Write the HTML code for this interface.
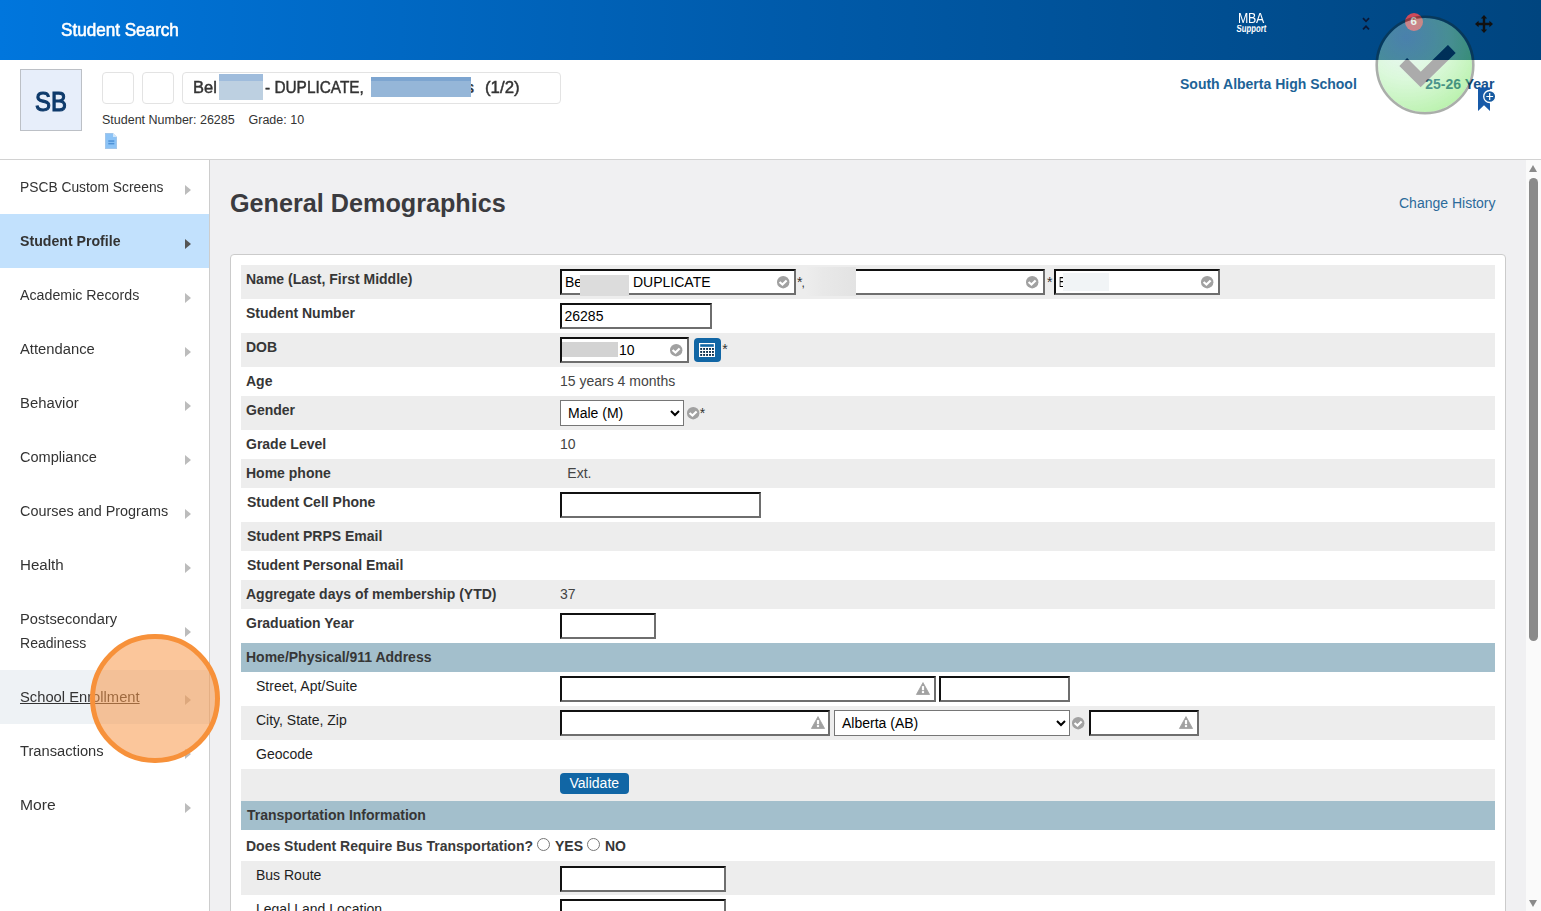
<!DOCTYPE html>
<html><head><meta charset="utf-8"><style>
*{box-sizing:border-box}
html,body{margin:0;padding:0}
body{width:1541px;height:911px;overflow:hidden;position:relative;background:#fff;font-family:"Liberation Sans",sans-serif;color:#333}
.a{position:absolute}
.t{position:absolute;white-space:nowrap;line-height:1}
.inp{position:absolute;background:#fff;border-style:solid;border-width:2px;border-color:#111 #6e6e6e #6e6e6e #111}
.sel{position:absolute;background:#fff;border:1px solid #767676;border-radius:0}
.tri{position:absolute;width:0;height:0;border-top:5px solid transparent;border-bottom:5px solid transparent;border-left:6px solid #bcbcbc}
svg{position:absolute;overflow:visible}
</style></head><body>
<div class="a" style="left:0;top:0;width:1541px;height:60px;background:linear-gradient(90deg,#0076dd 0%,#005bab 50%,#00457f 100%)"></div>
<div class="t" style="left:60.80px;top:20.76px;font-size:18px;font-weight:normal;color:#fff;transform-origin:0 0;transform:scaleX(0.95);-webkit-text-stroke:0.6px #fff;">Student Search</div>
<div class="t" style="left:1237.50px;top:10.73px;font-size:14.5px;font-weight:normal;color:#fff;transform-origin:0 0;transform:scaleX(0.85);letter-spacing:-0.3px;">MBA</div>
<div class="a" style="left:1236px;top:24.5px;width:32px;height:9px;overflow:hidden"><div class="t" style="left:0.5px;top:-1.6px;font-size:12px;font-weight:bold;color:#fff;transform-origin:0 0;transform:scale(0.65,0.9) skewX(-6deg)">Support</div></div>
<svg style="left:1360px;top:16px" width="12" height="16" viewBox="0 0 12 16"><path d="M3 2.2 L6 5.3 L9 2.2" fill="none" stroke="#0b1836" stroke-width="1.7"/><path d="M3 13.3 L6 10.3 L9 13.3" fill="none" stroke="#0b1836" stroke-width="1.7"/></svg>
<svg style="left:1474px;top:14px" width="20" height="20" viewBox="0 0 20 20"><path d="M10 1 L13.2 4.6 L11.2 4.6 L11.2 8.8 L15.4 8.8 L15.4 6.8 L19 10 L15.4 13.2 L15.4 11.2 L11.2 11.2 L11.2 15.4 L13.2 15.4 L10 19 L6.8 15.4 L8.8 15.4 L8.8 11.2 L4.6 11.2 L4.6 13.2 L1 10 L4.6 6.8 L4.6 8.8 L8.8 8.8 L8.8 4.6 L6.8 4.6 Z" fill="#111"/></svg>
<div class="a" style="left:1405px;top:12.5px;width:18px;height:18px;border-radius:50%;background:#cf4a5a"></div>
<div class="t" style="left:1410.60px;top:16.47px;font-size:11.5px;font-weight:bold;color:#fff;">6</div>
<div class="a" style="left:0;top:159px;width:1541px;height:1px;background:#d2d2d2"></div>
<div class="a" style="left:20px;top:69px;width:62px;height:62px;background:#e7eefa;border:1px solid #bcc0c6"></div>
<div class="t" style="left:35.20px;top:88.54px;font-size:27px;font-weight:normal;color:#0e3a6b;transform-origin:0 0;transform:scaleX(0.885);-webkit-text-stroke:1.1px #0e3a6b;">SB</div>
<div class="a" style="left:102px;top:72px;width:32px;height:32px;border:1px solid #e3e3e3;border-radius:4px"></div>
<div class="a" style="left:142px;top:72px;width:32px;height:32px;border:1px solid #e3e3e3;border-radius:4px"></div>
<div class="a" style="left:182px;top:72px;width:379px;height:32px;border:1px solid #e3e3e3;border-radius:4px"></div>
<div class="t" style="left:193.20px;top:78.61px;font-size:17px;font-weight:normal;color:#333;transform-origin:0 0;transform:scaleX(0.97);-webkit-text-stroke:0.45px #333;">Bel</div>
<div class="a" style="left:219px;top:81px;width:44px;height:18.5px;background:#bdd0e1"></div>
<div class="a" style="left:219px;top:73.5px;width:44px;height:7.5px;background:#9fbcdc"></div>
<div class="t" style="left:265.30px;top:78.61px;font-size:17px;font-weight:normal;color:#333;transform-origin:0 0;transform:scaleX(0.905);-webkit-text-stroke:0.45px #333;">- DUPLICATE,</div>
<div class="a" style="left:371px;top:80.6px;width:100px;height:16.8px;background:#95b6d8"></div>
<div class="a" style="left:371px;top:77px;width:100px;height:3.6px;background:#7da5d0"></div>
<div class="a" style="left:471px;top:75px;width:10px;height:24px;overflow:hidden"><div class="t" style="left:-5.5px;top:3.61px;font-size:17px;color:#333;-webkit-text-stroke:0.45px #333">s</div></div>
<div class="t" style="left:484.80px;top:78.61px;font-size:17px;font-weight:normal;color:#333;transform-origin:0 0;transform:scaleX(0.99);-webkit-text-stroke:0.45px #333;">(1/2)</div>
<div class="t" style="left:102.00px;top:113.62px;font-size:12.5px;font-weight:normal;color:#333;">Student Number: 26285</div>
<div class="t" style="left:248.50px;top:113.62px;font-size:12.5px;font-weight:normal;color:#333;">Grade: 10</div>
<svg style="left:105px;top:133px" width="12" height="16" viewBox="0 0 12 16"><path d="M0 0 H8 L12 4 V16 H0 Z" fill="#a2c6ea"/><path d="M1 1 H7.6 L11 4.4 V15 H1 Z" fill="#8cc3f6"/><path d="M8 0 V4 H12" fill="#d0e6fa"/><rect x="3.3" y="7.3" width="6" height="1.5" fill="#4d92d8"/><rect x="3.3" y="9.9" width="6" height="1.5" fill="#4d92d8"/></svg>
<div class="t" style="left:1180.00px;top:76.95px;font-size:14px;font-weight:bold;color:#1d6397;">South Alberta High School</div>
<div class="t" style="left:1425.30px;top:76.75px;font-size:14px;font-weight:bold;color:#15518c;">25-26 Year</div>
<svg style="left:1477px;top:87px" width="20" height="26" viewBox="0 0 20 26"><path d="M1 0.4 H13 V24 L7 18.2 L1 24 Z" fill="#175aa8"/><circle cx="12.7" cy="9.5" r="6" fill="#175aa0" stroke="#fff" stroke-width="1.3"/><path d="M12.7 6.1 V12.9 M9.3 9.5 H16.1" stroke="#fff" stroke-width="1.2"/></svg>
<div class="a" style="left:209px;top:160px;width:1px;height:751px;background:#cdcdcd"></div>
<div class="t" style="left:19.50px;top:180.15px;font-size:14px;font-weight:normal;color:#333;transform-origin:0 0;transform:scaleX(0.986);">PSCB Custom Screens</div>
<div class="tri" style="left:185px;top:185px;border-left-color:#bcbcbc"></div>
<div class="a" style="left:0;top:214px;width:209px;height:54px;background:#c2e1fd"></div>
<div class="t" style="left:19.50px;top:234.15px;font-size:14px;font-weight:bold;color:#333;transform-origin:0 0;transform:scaleX(1.01);">Student Profile</div>
<div class="tri" style="left:185px;top:239px;border-left-color:#555"></div>
<div class="t" style="left:19.50px;top:288.15px;font-size:14px;font-weight:normal;color:#333;transform-origin:0 0;transform:scaleX(1.015);">Academic Records</div>
<div class="tri" style="left:185px;top:293px;border-left-color:#bcbcbc"></div>
<div class="t" style="left:19.50px;top:342.15px;font-size:14px;font-weight:normal;color:#333;transform-origin:0 0;transform:scaleX(1.056);">Attendance</div>
<div class="tri" style="left:185px;top:347px;border-left-color:#bcbcbc"></div>
<div class="t" style="left:19.50px;top:396.15px;font-size:14px;font-weight:normal;color:#333;transform-origin:0 0;transform:scaleX(1.061);">Behavior</div>
<div class="tri" style="left:185px;top:401px;border-left-color:#bcbcbc"></div>
<div class="t" style="left:19.50px;top:450.15px;font-size:14px;font-weight:normal;color:#333;transform-origin:0 0;transform:scaleX(1.04);">Compliance</div>
<div class="tri" style="left:185px;top:455px;border-left-color:#bcbcbc"></div>
<div class="t" style="left:19.50px;top:504.15px;font-size:14px;font-weight:normal;color:#333;transform-origin:0 0;transform:scaleX(1.029);">Courses and Programs</div>
<div class="tri" style="left:185px;top:509px;border-left-color:#bcbcbc"></div>
<div class="t" style="left:19.50px;top:558.15px;font-size:14px;font-weight:normal;color:#333;transform-origin:0 0;transform:scaleX(1.08);">Health</div>
<div class="tri" style="left:185px;top:563px;border-left-color:#bcbcbc"></div>
<div class="t" style="left:19.50px;top:612.15px;font-size:14px;font-weight:normal;color:#333;transform-origin:0 0;transform:scaleX(1.049);">Postsecondary</div>
<div class="t" style="left:19.50px;top:636.15px;font-size:14px;font-weight:normal;color:#333;transform-origin:0 0;transform:scaleX(1.003);">Readiness</div>
<div class="tri" style="left:185px;top:627px;border-left-color:#bcbcbc"></div>
<div class="a" style="left:0;top:670px;width:209px;height:54px;background:#eef2f5"></div>
<div class="t" style="left:19.50px;top:690.15px;font-size:14px;font-weight:normal;color:#333;transform-origin:0 0;transform:scaleX(1.053);text-decoration:underline;">School Enrollment</div>
<div class="tri" style="left:185px;top:695px;border-left-color:#bcbcbc"></div>
<div class="t" style="left:19.50px;top:744.15px;font-size:14px;font-weight:normal;color:#333;transform-origin:0 0;transform:scaleX(1.05);">Transactions</div>
<div class="tri" style="left:185px;top:749px;border-left-color:#bcbcbc"></div>
<div class="t" style="left:19.50px;top:798.15px;font-size:14px;font-weight:normal;color:#333;transform-origin:0 0;transform:scaleX(1.12);">More</div>
<div class="tri" style="left:185px;top:803px;border-left-color:#bcbcbc"></div>
<div class="a" style="left:210px;top:160px;width:1316px;height:751px;background:#f0f0f2"></div>
<div class="a" style="left:1526px;top:160px;width:15px;height:751px;background:#fafafa"></div>
<div class="a" style="left:1529px;top:165px;width:0;height:0;border-left:4.5px solid transparent;border-right:4.5px solid transparent;border-bottom:7px solid #8a8a8a"></div>
<div class="a" style="left:1529px;top:178px;width:9px;height:463px;background:#8a8a8a;border-radius:4.5px"></div>
<div class="a" style="left:1529px;top:900px;width:0;height:0;border-left:4.5px solid transparent;border-right:4.5px solid transparent;border-top:7px solid #8a8a8a"></div>
<div class="t" style="left:230.00px;top:191.47px;font-size:25.2px;font-weight:bold;color:#3b3b3f;">General Demographics</div>
<div class="t" style="left:1399.00px;top:195.95px;font-size:14px;font-weight:normal;color:#2c6a9a;">Change History</div>
<div class="a" style="left:230px;top:254px;width:1276px;height:700px;background:#fff;border:1px solid #cbcbcb;border-radius:4px"></div>
<div class="a" style="left:241px;top:265px;width:1254px;height:34px;background:#ededed"></div>
<div class="t" style="left:246.00px;top:271.95px;font-size:14px;font-weight:bold;color:#363636;">Name (Last, First Middle)</div>
<div class="t" style="left:246.00px;top:305.95px;font-size:14px;font-weight:bold;color:#363636;">Student Number</div>
<div class="a" style="left:241px;top:333px;width:1254px;height:34px;background:#ededed"></div>
<div class="t" style="left:246.00px;top:339.95px;font-size:14px;font-weight:bold;color:#363636;">DOB</div>
<div class="t" style="left:246.00px;top:373.95px;font-size:14px;font-weight:bold;color:#363636;">Age</div>
<div class="a" style="left:241px;top:396px;width:1254px;height:34px;background:#ededed"></div>
<div class="t" style="left:246.00px;top:402.95px;font-size:14px;font-weight:bold;color:#363636;">Gender</div>
<div class="t" style="left:246.00px;top:436.95px;font-size:14px;font-weight:bold;color:#363636;">Grade Level</div>
<div class="a" style="left:241px;top:459px;width:1254px;height:29px;background:#ededed"></div>
<div class="t" style="left:246.00px;top:465.95px;font-size:14px;font-weight:bold;color:#363636;">Home phone</div>
<div class="t" style="left:247.00px;top:494.95px;font-size:14px;font-weight:bold;color:#363636;">Student Cell Phone</div>
<div class="a" style="left:241px;top:522px;width:1254px;height:29px;background:#ededed"></div>
<div class="t" style="left:247.00px;top:528.95px;font-size:14px;font-weight:bold;color:#363636;">Student PRPS Email</div>
<div class="t" style="left:247.00px;top:557.95px;font-size:14px;font-weight:bold;color:#363636;">Student Personal Email</div>
<div class="a" style="left:241px;top:580px;width:1254px;height:29px;background:#ededed"></div>
<div class="t" style="left:246.00px;top:586.95px;font-size:14px;font-weight:bold;color:#363636;">Aggregate days of membership (YTD)</div>
<div class="t" style="left:246.00px;top:615.95px;font-size:14px;font-weight:bold;color:#363636;">Graduation Year</div>
<div class="a" style="left:241px;top:643px;width:1254px;height:29px;background:#a3bfcc"></div>
<div class="t" style="left:246.00px;top:649.95px;font-size:14px;font-weight:bold;color:#363636;">Home/Physical/911 Address</div>
<div class="t" style="left:256.00px;top:678.95px;font-size:14px;font-weight:normal;color:#1e1e1e;">Street, Apt/Suite</div>
<div class="a" style="left:241px;top:706px;width:1254px;height:34px;background:#ededed"></div>
<div class="t" style="left:256.00px;top:712.95px;font-size:14px;font-weight:normal;color:#1e1e1e;">City, State, Zip</div>
<div class="t" style="left:256.00px;top:746.95px;font-size:14px;font-weight:normal;color:#1e1e1e;">Geocode</div>
<div class="a" style="left:241px;top:769px;width:1254px;height:32px;background:#ededed"></div>
<div class="a" style="left:241px;top:801px;width:1254px;height:29px;background:#a3bfcc"></div>
<div class="t" style="left:247.00px;top:807.95px;font-size:14px;font-weight:bold;color:#363636;">Transportation Information</div>
<div class="t" style="left:246.00px;top:838.55px;font-size:14px;font-weight:bold;color:#3a3a3a;">Does Student Require Bus Transportation?</div>
<div class="a" style="left:241px;top:861px;width:1254px;height:34px;background:#ededed"></div>
<div class="t" style="left:256.00px;top:867.95px;font-size:14px;font-weight:normal;color:#1e1e1e;">Bus Route</div>
<div class="t" style="left:256.00px;top:901.95px;font-size:14px;font-weight:normal;color:#1e1e1e;">Legal Land Location</div>
<div class="inp" style="left:560px;top:269px;width:236px;height:26px"></div>
<div class="t" style="left:565.00px;top:274.95px;font-size:14px;font-weight:normal;color:#000;">Be</div>
<div class="a" style="left:580px;top:275px;width:49px;height:21px;background:#dcdcdc"></div>
<div class="t" style="left:633.00px;top:274.95px;font-size:14px;font-weight:normal;color:#000;">DUPLICATE</div>
<svg style="left:776.8px;top:275.8px" width="12.4" height="12.4" viewBox="0 0 12 12"><circle cx="6" cy="6" r="6" fill="#a1a1a1"/><path d="M2.5 5.8 L5.3 8.3 L9.3 4.3" fill="none" stroke="#fff" stroke-width="2.1"/></svg>
<div class="t" style="left:797.00px;top:275.15px;font-size:14px;font-weight:normal;color:#333;">*</div>
<div class="t" style="left:801.50px;top:276.84px;font-size:12px;font-weight:normal;color:#333;">,</div>
<div class="inp" style="left:818px;top:269px;width:227px;height:26px"></div>
<div class="a" style="left:806px;top:267px;width:50px;height:29px;background:linear-gradient(90deg,#ededed 0%,#e8e8e8 35%,#e3e3e3 100%)"></div>
<svg style="left:1025.8px;top:275.8px" width="12.4" height="12.4" viewBox="0 0 12 12"><circle cx="6" cy="6" r="6" fill="#a1a1a1"/><path d="M2.5 5.8 L5.3 8.3 L9.3 4.3" fill="none" stroke="#fff" stroke-width="2.1"/></svg>
<div class="t" style="left:1047.00px;top:275.15px;font-size:14px;font-weight:normal;color:#333;">*</div>
<div class="inp" style="left:1054px;top:269px;width:166px;height:26px"></div>
<div class="t" style="left:1059.00px;top:274.95px;font-size:14px;font-weight:normal;color:#000;transform-origin:0 0;transform:scaleX(0.6);">E</div>
<div class="a" style="left:1063px;top:273px;width:46px;height:18px;background:#f1f4f6"></div>
<svg style="left:1200.8px;top:275.8px" width="12.4" height="12.4" viewBox="0 0 12 12"><circle cx="6" cy="6" r="6" fill="#a1a1a1"/><path d="M2.5 5.8 L5.3 8.3 L9.3 4.3" fill="none" stroke="#fff" stroke-width="2.1"/></svg>
<div class="inp" style="left:560px;top:303px;width:152px;height:26px"></div>
<div class="t" style="left:564.50px;top:308.65px;font-size:14px;font-weight:normal;color:#000;">26285</div>
<div class="inp" style="left:560px;top:337px;width:129px;height:26px"></div>
<div class="a" style="left:562px;top:342px;width:56px;height:15px;background:#d3d3d3"></div>
<div class="t" style="left:619.00px;top:342.65px;font-size:14px;font-weight:normal;color:#000;">10</div>
<svg style="left:669.8px;top:343.8px" width="12.4" height="12.4" viewBox="0 0 12 12"><circle cx="6" cy="6" r="6" fill="#a1a1a1"/><path d="M2.5 5.8 L5.3 8.3 L9.3 4.3" fill="none" stroke="#fff" stroke-width="2.1"/></svg>
<div class="a" style="left:694px;top:338px;width:27px;height:24px;background:#1166a5;border-radius:4px"></div>
<svg style="left:694px;top:338px" width="27" height="24" viewBox="0 0 27 24"><rect x="5" y="5" width="16" height="14" fill="#fff"/><rect x="6.2" y="6.2" width="13.6" height="2.6" fill="#1166a5"/><rect x="6.20" y="10.00" width="1.9" height="1.9" fill="#0b2e4c"/><rect x="6.20" y="13.00" width="1.9" height="1.9" fill="#0b2e4c"/><rect x="6.20" y="16.00" width="1.9" height="1.9" fill="#0b2e4c"/><rect x="9.15" y="10.00" width="1.9" height="1.9" fill="#0b2e4c"/><rect x="9.15" y="13.00" width="1.9" height="1.9" fill="#0b2e4c"/><rect x="9.15" y="16.00" width="1.9" height="1.9" fill="#0b2e4c"/><rect x="12.10" y="10.00" width="1.9" height="1.9" fill="#0b2e4c"/><rect x="12.10" y="13.00" width="1.9" height="1.9" fill="#0b2e4c"/><rect x="12.10" y="16.00" width="1.9" height="1.9" fill="#0b2e4c"/><rect x="15.05" y="10.00" width="1.9" height="1.9" fill="#0b2e4c"/><rect x="15.05" y="13.00" width="1.9" height="1.9" fill="#0b2e4c"/><rect x="15.05" y="16.00" width="1.9" height="1.9" fill="#0b2e4c"/><rect x="18.00" y="10.00" width="1.9" height="1.9" fill="#0b2e4c"/><rect x="18.00" y="13.00" width="1.9" height="1.9" fill="#0b2e4c"/><rect x="18.00" y="16.00" width="1.9" height="1.9" fill="#0b2e4c"/></svg>
<div class="t" style="left:722.30px;top:342.15px;font-size:14px;font-weight:normal;color:#333;">*</div>
<div class="t" style="left:560.00px;top:373.75px;font-size:14px;font-weight:normal;color:#444;">15 years 4 months</div>
<div class="sel" style="left:560px;top:400px;width:124px;height:26px"></div>
<div class="t" style="left:568.00px;top:406.15px;font-size:14px;font-weight:normal;color:#000;">Male (M)</div>
<svg style="left:669.7px;top:410.0px" width="10" height="6" viewBox="0 0 10 6"><path d="M1 1 L5 5 L9 1" fill="none" stroke="#000" stroke-width="2"/></svg>
<svg style="left:687.0px;top:406.8px" width="12.4" height="12.4" viewBox="0 0 12 12"><circle cx="6" cy="6" r="6" fill="#a1a1a1"/><path d="M2.5 5.8 L5.3 8.3 L9.3 4.3" fill="none" stroke="#fff" stroke-width="2.1"/></svg>
<div class="t" style="left:699.80px;top:406.15px;font-size:14px;font-weight:normal;color:#333;">*</div>
<div class="t" style="left:560.00px;top:436.65px;font-size:14px;font-weight:normal;color:#444;">10</div>
<div class="t" style="left:567.30px;top:465.95px;font-size:14px;font-weight:normal;color:#444;">Ext.</div>
<div class="inp" style="left:560px;top:492px;width:201px;height:26px"></div>
<div class="t" style="left:560.00px;top:586.65px;font-size:14px;font-weight:normal;color:#444;">37</div>
<div class="inp" style="left:560px;top:613px;width:96px;height:26px"></div>
<div class="inp" style="left:560px;top:676px;width:376px;height:26px"></div>
<svg style="left:916px;top:681.6px" width="14" height="13" viewBox="0 0 14 13"><path d="M7 0.6 L13.6 12.5 H0.4 Z" fill="#a1a1a1" stroke="#a1a1a1" stroke-width="0.8" stroke-linejoin="round"/><rect x="5.9" y="4.1" width="2.2" height="4.1" fill="#fff"/><rect x="5.9" y="9.1" width="2.2" height="2.0" fill="#fff"/></svg>
<div class="inp" style="left:939px;top:676px;width:131px;height:26px"></div>
<div class="inp" style="left:560px;top:710px;width:270px;height:26px"></div>
<svg style="left:811px;top:715.6px" width="14" height="13" viewBox="0 0 14 13"><path d="M7 0.6 L13.6 12.5 H0.4 Z" fill="#a1a1a1" stroke="#a1a1a1" stroke-width="0.8" stroke-linejoin="round"/><rect x="5.9" y="4.1" width="2.2" height="4.1" fill="#fff"/><rect x="5.9" y="9.1" width="2.2" height="2.0" fill="#fff"/></svg>
<div class="sel" style="left:834px;top:710px;width:236px;height:26px"></div>
<div class="t" style="left:842.00px;top:716.15px;font-size:14px;font-weight:normal;color:#000;">Alberta (AB)</div>
<svg style="left:1055.7px;top:720.0px" width="10" height="6" viewBox="0 0 10 6"><path d="M1 1 L5 5 L9 1" fill="none" stroke="#000" stroke-width="2"/></svg>
<svg style="left:1072.3px;top:716.8px" width="12.4" height="12.4" viewBox="0 0 12 12"><circle cx="6" cy="6" r="6" fill="#a1a1a1"/><path d="M2.5 5.8 L5.3 8.3 L9.3 4.3" fill="none" stroke="#fff" stroke-width="2.1"/></svg>
<div class="inp" style="left:1089px;top:710px;width:110px;height:26px"></div>
<svg style="left:1179px;top:715.6px" width="14" height="13" viewBox="0 0 14 13"><path d="M7 0.6 L13.6 12.5 H0.4 Z" fill="#a1a1a1" stroke="#a1a1a1" stroke-width="0.8" stroke-linejoin="round"/><rect x="5.9" y="4.1" width="2.2" height="4.1" fill="#fff"/><rect x="5.9" y="9.1" width="2.2" height="2.0" fill="#fff"/></svg>
<div class="a" style="left:560px;top:773px;width:69px;height:20.5px;background:#1166a5;border-radius:4px"></div>
<div class="t" style="left:569.50px;top:775.75px;font-size:14px;font-weight:normal;color:#fff;">Validate</div>
<div class="a" style="left:537px;top:838px;width:13px;height:13px;border:1px solid #767676;border-radius:50%;background:#fff"></div>
<div class="t" style="left:555.00px;top:839.15px;font-size:14px;font-weight:bold;color:#363636;">YES</div>
<div class="a" style="left:587px;top:838px;width:13px;height:13px;border:1px solid #767676;border-radius:50%;background:#fff"></div>
<div class="t" style="left:605.00px;top:839.15px;font-size:14px;font-weight:bold;color:#363636;">NO</div>
<div class="inp" style="left:560px;top:866px;width:166px;height:26px"></div>
<div class="inp" style="left:560px;top:899px;width:166px;height:26px"></div>
<div class="a" style="left:90.2px;top:633.6px;width:129.6px;height:129.6px;border-radius:50%;border:5.6px solid #f7913a;background:rgba(247,152,72,0.55)"></div>
<svg style="left:1374.8px;top:15px" width="100" height="100" viewBox="0 0 100 100"><defs><radialGradient id="gg" cx="0.3" cy="0.2" r="0.9"><stop offset="0" stop-color="rgb(205,228,240)" stop-opacity="0.36"/><stop offset="0.5" stop-color="rgb(170,240,170)" stop-opacity="0.42"/><stop offset="1" stop-color="rgb(100,225,70)" stop-opacity="0.46"/></radialGradient><mask id="mk"><rect x="0" y="0" width="100" height="100" fill="#fff"/><path d="M28.2 47 L45.7 64.5 L76.8 34" fill="none" stroke="#000" stroke-width="11"/></mask></defs><circle cx="50" cy="50" r="47" fill="url(#gg)" mask="url(#mk)"/><circle cx="50" cy="50" r="48.3" fill="none" stroke="rgba(20,30,20,0.36)" stroke-width="2.6"/><path d="M28.2 47 L45.7 64.5 L76.8 34" fill="none" stroke="rgba(0,0,0,0.33)" stroke-width="11" stroke-linejoin="miter"/></svg>
</body></html>
